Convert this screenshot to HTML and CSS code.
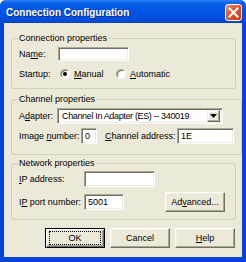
FILE: index.html
```html
<!DOCTYPE html>
<html>
<head>
    <meta charset="UTF-8">
    <title>Connection Configuration</title>
    <link rel="stylesheet" href="styles.css">
</head>
<body>
    <div class="window">
        <div class="titlebar">
            <span class="title">Connection Configuration</span>
            <span class="close">
                <svg width="11" height="11" viewBox="0 0 11 11"><path d="M1.5 1.5 L9.5 9.5 M9.5 1.5 L1.5 9.5" stroke="#fff" stroke-width="2" stroke-linecap="square"/></svg>
            </span>
        </div>
        <div class="client">
            <fieldset class="group g1">
                <legend>Connection properties</legend>
                <div class="row">
                    <span class="lbl w-name">Na<u>m</u>e:</span>
                    <span class="field f-name"></span>
                </div>
                <div class="row r-startup">
                    <span class="lbl w-startup">Startup:</span>
                    <span class="radio checked"></span>
                    <span class="opt"><u>M</u>anual</span>
                    <span class="radio"></span>
                    <span class="opt"><u>A</u>utomatic</span>
                </div>
            </fieldset>

            <fieldset class="group g2">
                <legend>Channel properties</legend>
                <div class="row">
                    <span class="lbl w-adapter">A<u>d</u>apter:</span>
                    <span class="combo">
                        <span class="combo-text">Channel In Adapter (ES) -- 340019</span>
                        <span class="combo-btn"><svg width="7" height="4" viewBox="0 0 7 4"><path d="M0 0 H7 L3.5 4 Z" fill="#000"/></svg></span>
                    </span>
                </div>
                <div class="row r-image">
                    <span class="lbl w-image">Image <u>n</u>umber:</span>
                    <span class="field f-image">0</span>
                    <span class="lbl w-chan"><u>C</u>hannel address:</span>
                    <span class="field f-chan">1E</span>
                </div>
            </fieldset>

            <fieldset class="group g3">
                <legend>Network properties</legend>
                <div class="row">
                    <span class="lbl w-ip"><u>I</u>P address:</span>
                    <span class="field f-ip"></span>
                </div>
                <div class="row r-port">
                    <span class="lbl w-ip">I<u>P</u> port number:</span>
                    <span class="field f-port">5001</span>
                    <span class="btn b-adv">Ad<u>v</u>anced...</span>
                </div>
            </fieldset>

            <div class="buttons">
                <span class="btn default"><span class="focus">OK</span></span>
                <span class="btn">Cancel</span>
                <span class="btn"><u>H</u>elp</span>
            </div>
        </div>
    </div>
</body>
</html>
```

FILE: styles.css
```css
* {
    margin: 0;
    padding: 0;
    box-sizing: border-box;
}
body {
    font-family: "Liberation Sans", Arial, sans-serif;
    font-size: 9px;
    color: #000;
    background: #fff;
}
.window {
    width: 246px;
    height: 262px;
    background: #0842d6;
    border-radius: 6px 6px 0 0;
    display: flex;
    flex-direction: column;
    overflow: hidden;
}
.titlebar {
    height: 23px;
    flex: none;
    display: flex;
    align-items: center;
    justify-content: space-between;
    padding: 0 4px 0 6px;
    background: linear-gradient(#2b81f5 0%, #0a5fe8 15%, #0055e5 40%, #0350de 80%, #0644c8 100%);
}
.title {
    color: #fff;
    font-weight: bold;
    font-size: 10px;
    text-shadow: 1px 1px #0a2a8c;
    padding-top: 1px;
}
.close {
    width: 17px;
    height: 17px;
    margin-top: 2px;
    border: 1px solid #fff;
    border-radius: 3px;
    background: linear-gradient(135deg, #f08c6c 0%, #e0552c 45%, #c8381a 100%);
    display: flex;
    align-items: center;
    justify-content: center;
}
.client {
    flex: 1;
    margin: 0 4px 5px 4px;
    background: #ece9d8;
    padding-top: 9px;
    display: flex;
    flex-direction: column;
}
.group {
    margin: 0 6px 0 7px;
    border: 1px solid #d0d0bf;
    border-radius: 3px;
    padding: 0 7px;
}
.group legend {
    line-height: 13px;
    padding: 0 1px;
    margin-left: -1px;
}
.g1 {
    padding-top: 1px;
    padding-bottom: 6px;
}
.g2 {
    margin-top: 4px;
    padding-top: 2px;
    padding-bottom: 10px;
}
.g3 {
    margin-top: 2px;
    padding-top: 1px;
    padding-bottom: 7px;
}
.row {
    display: flex;
    align-items: center;
    height: 16px;
}
.r-startup {
    margin-top: 4px;
}
.r-image {
    margin-top: 4px;
}
.r-port {
    margin-top: 4px;
    height: 21px;
}
.lbl {
    flex: none;
}
.w-name { width: 39px; }
.w-startup { width: 39px; }
.w-adapter { width: 38px; }
.w-image { width: 62px; }
.w-chan { width: 72px; margin-left: 8px; }
.w-ip { width: 65px; }

.field {
    display: flex;
    align-items: center;
    height: 16px;
    background: #fff;
    border: 1px solid;
    border-color: #aca899 #fff #fff #aca899;
    box-shadow: inset 1px 1px #716f64, inset -1px -1px #f1efe2;
    padding-left: 3px;
}
.f-name { width: 71px; height: 14px; }
.f-image { width: 16px; }
.f-chan { width: 57px; }
.f-ip { width: 71px; }
.f-port { width: 40px; }

.radio {
    width: 10px;
    height: 10px;
    border-radius: 50%;
    background: #fff;
    border: 1px solid;
    border-color: #aca899 #fff #fff #aca899;
    box-shadow: inset 1px 1px #716f64;
    display: flex;
    align-items: center;
    justify-content: center;
    margin-left: 2px;
}
.radio.checked::after {
    content: "";
    width: 4px;
    height: 4px;
    border-radius: 50%;
    background: #000;
}
.opt {
    margin-left: 4px;
    width: 40px;
}

.combo {
    display: flex;
    align-items: center;
    width: 166px;
    height: 16px;
    background: #fff;
    border: 1px solid;
    border-color: #aca899 #fff #fff #aca899;
    box-shadow: inset 1px 1px #716f64, inset -1px -1px #f1efe2;
    padding: 2px 2px 2px 4px;
}
.combo-text {
    flex: 1;
    letter-spacing: -0.35px;
}
.combo-btn {
    width: 13px;
    height: 12px;
    background: #ece9d8;
    border: 1px solid;
    border-color: #f1efe2 #716f64 #716f64 #f1efe2;
    box-shadow: inset -1px -1px #aca899, inset 1px 1px #fff;
    display: flex;
    align-items: center;
    justify-content: center;
}

.btn {
    display: flex;
    align-items: center;
    justify-content: center;
    height: 20px;
    background: #ece9d8;
    border: 1px solid;
    border-color: #fff #716f64 #716f64 #fff;
    box-shadow: inset -1px -1px #aca899, inset 1px 1px #f1efe2;
}
.b-adv {
    width: 60px;
    margin-left: 41px;
}
.buttons {
    display: flex;
    justify-content: flex-end;
    gap: 5px;
    margin-top: 8px;
    padding-right: 7px;
}
.buttons .btn {
    width: 60px;
}
.btn.default {
    border: 1px solid #000;
    box-shadow: inset 1px 1px #fff, inset -1px -1px #716f64, inset -2px -2px #aca899;
}
.focus {
    display: flex;
    align-items: center;
    justify-content: center;
    width: 52px;
    height: 14px;
    border: 1px dotted #000;
}
```
